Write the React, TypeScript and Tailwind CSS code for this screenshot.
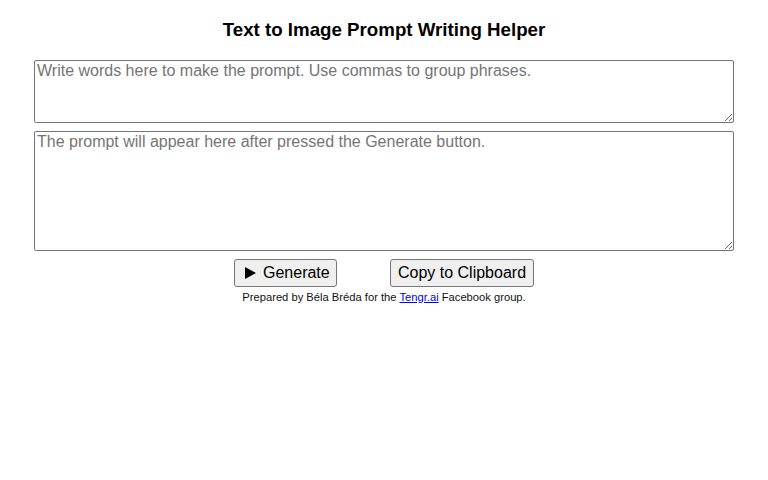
// プロンプト作成ヘルパー
import { useState } from "react";

export default function App() {
  const [input, setInput] = useState("");
  const [output, setOutput] = useState("");

  const generate = () => {
    const parts = input
      .split(",")
      .map((p) => p.trim())
      .filter(Boolean);
    setOutput(parts.map((p) => `(${p})`).join(", "));
  };

  const copy = () => {
    navigator.clipboard?.writeText(output).catch(() => {});
  };

  return (
    <div className="min-h-[480px] bg-white text-black font-['Liberation_Sans',Arial,sans-serif]">
      <h3 className="pt-[19px] text-center text-[18.72px] font-bold leading-[21px]">
        Text to Image Prompt Writing Helper
      </h3>
      <div className="mt-[20px] flex flex-col items-center">
        <textarea
          value={input}
          onChange={(e) => setInput(e.target.value)}
          placeholder="Write words here to make the prompt. Use commas to group phrases."
          className="w-[700px] h-[63px] border border-[#767676] rounded-[2px] px-[2px] py-[1px] text-[16px] leading-[18px] placeholder:text-[#757575] resize"
        />
        <textarea
          value={output}
          onChange={(e) => setOutput(e.target.value)}
          placeholder="The prompt will appear here after pressed the Generate button."
          className="mt-[8px] w-[700px] h-[120px] border border-[#767676] rounded-[2px] px-[2px] py-[1px] text-[16px] leading-[18px] placeholder:text-[#757575] resize"
        />
        <div className="mt-[8px] flex items-center gap-[53px]">
          <button
            onClick={generate}
            className="h-[28px] w-[103px] pl-[9px] flex items-center gap-[7px] bg-[#efefef] border border-[#767676] rounded-[3px] text-[16px]"
          >
            <svg width="12" height="12" viewBox="0 0 12 12" className="shrink-0">
              <path d="M1 0 L12 6 L1 12 Z" fill="#000" />
            </svg>
            <span>Generate</span>
          </button>
          <button
            onClick={copy}
            className="h-[28px] w-[144px] bg-[#efefef] border border-[#767676] rounded-[3px] text-[16px]"
          >
            Copy to Clipboard
          </button>
        </div>
        <p className="mt-[4px] text-[11.2px] leading-[13px] text-[#111]">
          Prepared by Béla Bréda for the{" "}
          <a href="#" className="text-[#0000ee] underline">
            Tengr.ai
          </a>{" "}
          Facebook group.
        </p>
      </div>
    </div>
  );
}
